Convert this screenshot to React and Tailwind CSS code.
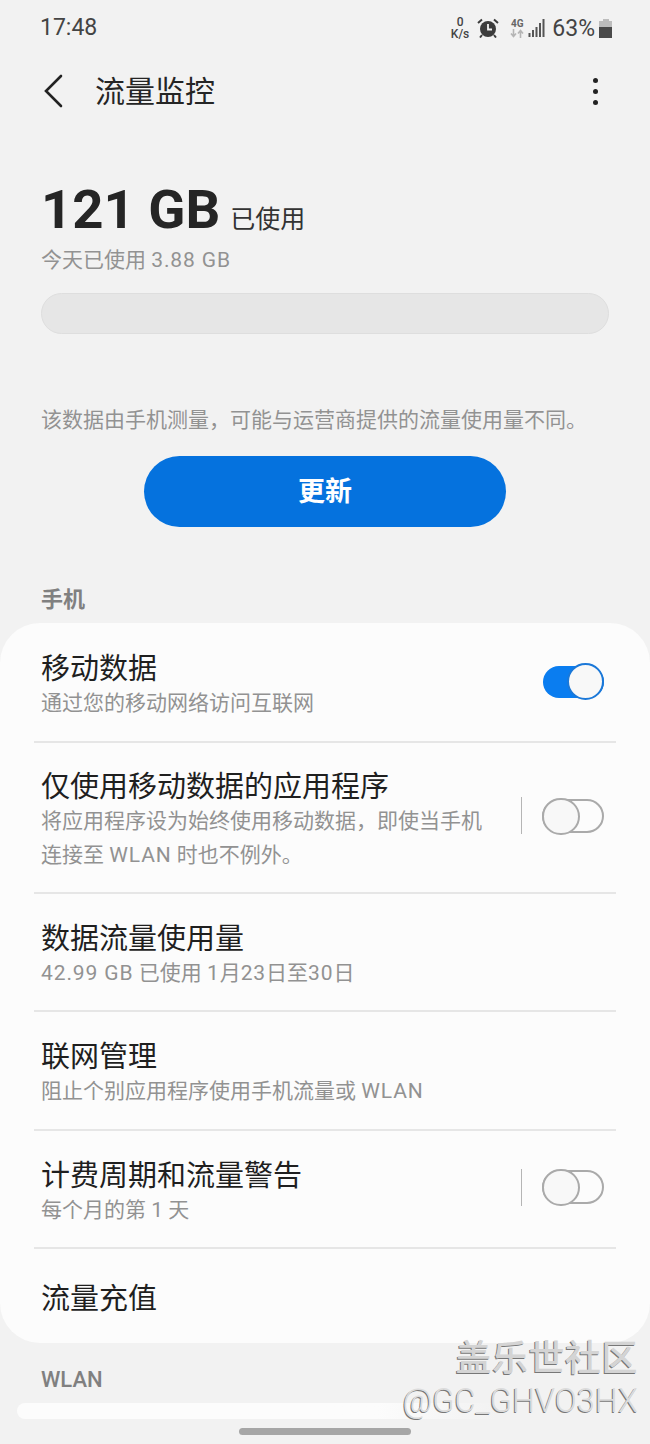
// Data usage screen
function Toggle({ on }) {
  if (on) {
    return (
      <div className="relative top-[2px] h-[32px] w-[61px] rounded-full bg-[#0a7df0]">
        <div className="absolute right-0 top-[-3px] h-[37px] w-[37px] rounded-full border-2 border-[#1b78d8] bg-[#f8f8f8]" />
      </div>
    );
  }
  return (
    <div className="relative h-[34px] w-[62px] rounded-full border-2 border-[#aaaaaa]">
      <div className="absolute left-[-2px] top-[-3px] h-[37px] w-[38px] rounded-full border-2 border-[#aaaaaa] bg-[#f8f8f8]" />
    </div>
  );
}

function Row({ title, sub, sub2, toggle, split, height, last }) {
  return (
    <div className={`${height} relative mx-[34px] flex items-center justify-between px-[7px] ${last ? "" : "border-b-2 border-[#e6e6e6]"}`}>
      <div className="min-w-0 pt-[5px]">
        <div className="text-[29px] leading-[38px] text-[#1f1f1f]">{title}</div>
        {sub && <div className="mt-[-2px] text-[21px] leading-[34px] text-[#929292]">{sub}</div>}
        {sub2 && <div className="text-[21px] leading-[34px] text-[#929292]">{sub2}</div>}
      </div>
      <div className="mb-[4px] mr-[5px] flex items-center">
        {split && <div className="mr-[20px] h-[37px] w-[1px] bg-[#b5b5b5]" />}
        {toggle && <Toggle on={toggle === "on"} />}
      </div>
    </div>
  );
}

function StatusIcons() {
  return (
    <div className="flex items-center text-[#444444]">
      <div className="mr-[8px] flex flex-col items-center text-[12px] font-medium leading-[12px]">
        <span>0</span>
        <span>K/s</span>
      </div>
      <svg width="22" height="20" viewBox="0 0 22 20" className="mr-[11px]">
        <circle cx="11" cy="11" r="8" fill="#3c3c3c" />
        <path d="M11 6v5.5h4" stroke="#f2f2f2" strokeWidth="1.8" fill="none" />
        <path d="M1 5l4-3.5M21 5l-4-3.5" stroke="#3c3c3c" strokeWidth="2" />
        <path d="M5 17l-2 2.5M17 17l2 2.5" stroke="#3c3c3c" strokeWidth="2" />
      </svg>
      <div className="mr-[4px] flex flex-col items-center">
        <span className="text-[10px] font-bold leading-[10px] text-[#666666]">4G</span>
        <svg width="14" height="9" viewBox="0 0 14 9">
          <path d="M3.500 0v7M1 4.500l2.500 3 2.500-3" stroke="#b5b5b5" strokeWidth="1.6" fill="none" />
          <path d="M10.500 9V2M8 4.500l2.500-3 2.500 3" stroke="#b5b5b5" strokeWidth="1.6" fill="none" />
        </svg>
      </div>
      <svg width="17" height="18" viewBox="0 0 17 18" className="mr-[7px]">
        <path d="M1.500 14v4M5 11v7M8.500 8v10M12 4v14M15.500 0v18" stroke="#555555" strokeWidth="2" />
      </svg>
      <span className="mr-[4px] text-[23px] leading-none text-[#444444]">63%</span>
      <div className="flex h-[19px] w-[13px] flex-col items-center">
        <div className="h-[2px] w-[6px] bg-[#bdbdbd]" />
        <div className="h-[6px] w-[13px] bg-[#bdbdbd]" />
        <div className="h-[11px] w-[13px] bg-[#4a4a4a]" />
      </div>
    </div>
  );
}

// Latin runs are set a little wider than Roboto in the picture
function Lt({ children }) {
  return <span className="tracking-[0.9px]">{children}</span>;
}

export default function App() {
  return (
    <div className="relative h-[1444px] w-[650px] overflow-hidden bg-[#f2f2f2] font-['Roboto','Noto_Sans_CJK_SC',sans-serif]">
      {/* status bar */}
      <div className="flex h-[56px] items-center justify-between pl-[40px] pr-[38px]">
        <span className="text-[23px] text-[#444444]">17:48</span>
        <StatusIcons />
      </div>

      {/* app bar */}
      <div className="flex h-[70px] items-center pl-[43px] pr-[52px]">
        <svg width="20" height="34" viewBox="0 0 20 34">
          <path d="M18 2L3 17l15 15" stroke="#222222" strokeWidth="2.6" fill="none" strokeLinecap="round" />
        </svg>
        <span className="ml-[32px] flex-1 text-[30px] text-[#252525]">流量监控</span>
        <div className="flex flex-col gap-[6px]">
          <div className="h-[5px] w-[5px] rounded-full bg-[#222222]" />
          <div className="h-[5px] w-[5px] rounded-full bg-[#222222]" />
          <div className="h-[5px] w-[5px] rounded-full bg-[#222222]" />
        </div>
      </div>

      {/* usage summary */}
      <div className="px-[41px] pt-[49px]">
        <div className="flex h-[68px] items-baseline">
          <span className="text-[54.500px] font-bold leading-[68px] text-[#252525]">121 GB</span>
          <span className="ml-[10px] text-[25px] text-[#333333]">已使用</span>
        </div>
        <div className="mt-[2px] text-[21px] leading-[30px] text-[#929292]">今天已使用 <Lt>3.88 GB</Lt></div>
        <div className="mt-[18px] h-[41px] w-[568px] rounded-full border border-[#dedede] bg-[#e6e6e6]" />
        <div className="mt-[70px] whitespace-nowrap text-[21px] leading-[32px] text-[#929292]">
          该数据由手机测量{"\uFF0C"}可能与运营商提供的流量使用量不同。
        </div>
      </div>

      <div className="mt-[20px] flex justify-center">
        <button className="h-[71px] w-[362px] rounded-full bg-[#0572de] pt-[2px] text-[27px] font-bold text-white">更新</button>
      </div>

      <div className="mt-[57px] px-[41px] text-[22px] font-bold leading-[32px] text-[#808080]">手机</div>

      {/* mobile settings card */}
      <div className="mt-[7px] h-[720px] rounded-[40px] bg-[#fcfcfc]">
        <Row height="h-[120px]" title="移动数据" sub="通过您的移动网络访问互联网" toggle="on" />
        <Row
          height="h-[151px]"
          title="仅使用移动数据的应用程序"
          sub={<>将应用程序设为始终使用移动数据{"\uFF0C"}即使当手机</>}
          sub2={<>连接至 <Lt>WLAN</Lt> 时也不例外。</>}
          toggle="off"
          split
        />
        <Row height="h-[118px]" title="数据流量使用量" sub={<><Lt>42.99 GB</Lt> 已使用 <Lt>1</Lt>月<Lt>23</Lt>日至<Lt>30</Lt>日</>} />
        <Row height="h-[119px]" title="联网管理" sub={<>阻止个别应用程序使用手机流量或 <Lt>WLAN</Lt></>} />
        <Row height="h-[118px]" title="计费周期和流量警告" sub="每个月的第 1 天" toggle="off" split />
        <Row height="h-[94px]" title="流量充值" last />
      </div>

      <div className="mt-[21px] px-[41px] text-[22px] font-medium leading-[32px] text-[#808080]">WLAN</div>
      <div className="ml-[17px] mt-[7px] h-[16px] w-[480px] rounded-l-full bg-gradient-to-r from-[#fcfcfc] from-[75%] to-[#f2f2f2]" />

      {/* gesture pill */}
      <div className="absolute bottom-[9px] left-[239px] h-[7px] w-[172px] rounded-full bg-[#a6a6a6]" />

      {/* watermark */}
      <div className="absolute right-[12px] top-[1338px] text-right leading-none">
        <div className="text-[36px] font-medium leading-[42px] tracking-[0.5px] text-[#d4d4d4] [text-shadow:-1px_1px_0_#777777]">盖乐世社区</div>
        <div className="mt-[3px] text-[32.500px] font-light leading-[36px] text-[#dcdcdc] [text-shadow:-1px_1px_0_#777777]">@GC_GHVO3HX</div>
      </div>
    </div>
  );
}
